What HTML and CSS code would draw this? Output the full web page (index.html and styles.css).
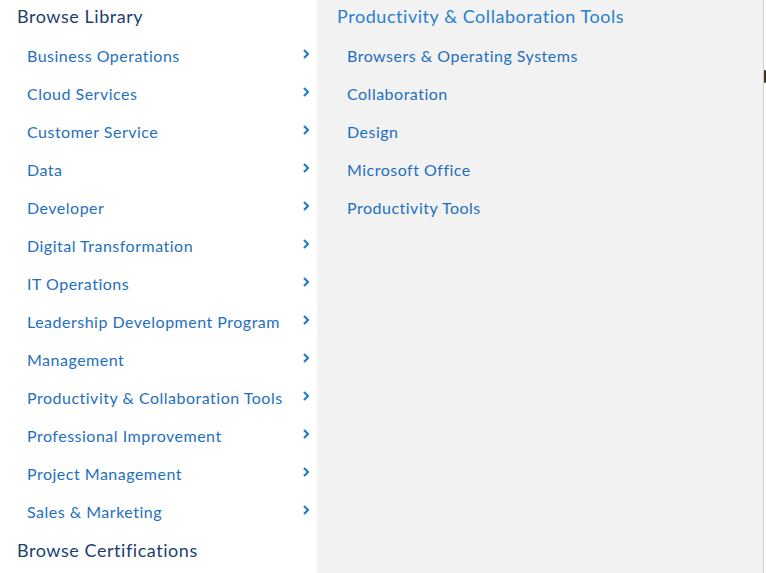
FILE: index.html
```html
<!DOCTYPE html>
<html lang="en">
<head>
<meta charset="utf-8">
<title>Browse Library</title>
<link rel="stylesheet" href="styles.css">
</head>
<body>
<div class="menu">
  <nav class="col-left">
    <div class="heading">Browse Library</div>
    <ul class="list">
      <li class="item"><span>Business Operations</span><svg class="chev" viewBox="0 0 6 10"><polyline points="1,1 5,5 1,9"/></svg></li>
      <li class="item"><span>Cloud Services</span><svg class="chev" viewBox="0 0 6 10"><polyline points="1,1 5,5 1,9"/></svg></li>
      <li class="item"><span>Customer Service</span><svg class="chev" viewBox="0 0 6 10"><polyline points="1,1 5,5 1,9"/></svg></li>
      <li class="item"><span>Data</span><svg class="chev" viewBox="0 0 6 10"><polyline points="1,1 5,5 1,9"/></svg></li>
      <li class="item"><span>Developer</span><svg class="chev" viewBox="0 0 6 10"><polyline points="1,1 5,5 1,9"/></svg></li>
      <li class="item"><span>Digital Transformation</span><svg class="chev" viewBox="0 0 6 10"><polyline points="1,1 5,5 1,9"/></svg></li>
      <li class="item"><span>IT Operations</span><svg class="chev" viewBox="0 0 6 10"><polyline points="1,1 5,5 1,9"/></svg></li>
      <li class="item"><span>Leadership Development Program</span><svg class="chev" viewBox="0 0 6 10"><polyline points="1,1 5,5 1,9"/></svg></li>
      <li class="item"><span>Management</span><svg class="chev" viewBox="0 0 6 10"><polyline points="1,1 5,5 1,9"/></svg></li>
      <li class="item"><span>Productivity &amp; Collaboration Tools</span><svg class="chev" viewBox="0 0 6 10"><polyline points="1,1 5,5 1,9"/></svg></li>
      <li class="item"><span>Professional Improvement</span><svg class="chev" viewBox="0 0 6 10"><polyline points="1,1 5,5 1,9"/></svg></li>
      <li class="item"><span>Project Management</span><svg class="chev" viewBox="0 0 6 10"><polyline points="1,1 5,5 1,9"/></svg></li>
      <li class="item"><span>Sales &amp; Marketing</span><svg class="chev" viewBox="0 0 6 10"><polyline points="1,1 5,5 1,9"/></svg></li>
    </ul>
    <div class="heading heading-cert">Browse Certifications</div>
  </nav>
  <section class="col-right">
    <div class="sub-heading">Productivity &amp; Collaboration Tools</div>
    <ul class="list">
      <li class="sub-item">Browsers &amp; Operating Systems</li>
      <li class="sub-item">Collaboration</li>
      <li class="sub-item">Design</li>
      <li class="sub-item">Microsoft Office</li>
      <li class="sub-item">Productivity Tools</li>
    </ul>
  </section>
  <div class="edge"><span class="edge-mark"></span></div>
</div>
</body>
</html>
```

FILE: styles.css
```css
html, body {
  margin: 0;
  padding: 0;
  background: #ffffff;
}
body {
  font-family: Lato, "Open Sans", sans-serif;
  width: 766px;
  height: 573px;
  overflow: hidden;
}
.menu {
  display: flex;
  height: 573px;
}
.col-left {
  width: 317px;
  flex: none;
  background: #ffffff;
}
.heading {
  font-size: 18px;
  line-height: 33px;
  color: #1d3e72;
  padding-left: 17px;
  padding-bottom: 4px;
  letter-spacing: 0.55px;
}
.heading-cert {
  padding-top: 3px;
}
.list {
  list-style: none;
  margin: 0;
  padding: 0;
}
.item {
  display: flex;
  justify-content: space-between;
  align-items: flex-start;
  height: 38px;
  line-height: 38px;
  padding-left: 27px;
  padding-right: 8px;
  font-size: 16px;
  color: #1f6fbf;
  letter-spacing: 0.5px;
  white-space: nowrap;
}
.chev {
  width: 6px;
  height: 10px;
  margin-top: 12px;
  flex: none;
  fill: none;
  stroke: #1a78d0;
  stroke-width: 2;
}
.col-right {
  flex: 1;
  background: #f2f2f2;
  border-right: 1px solid #cfcfcf;
}
.sub-heading {
  font-size: 18px;
  line-height: 33px;
  padding-left: 20px;
  padding-bottom: 4px;
  color: #2a7fcc;
  letter-spacing: 0.55px;
}
.sub-item {
  height: 38px;
  line-height: 38px;
  padding-left: 30px;
  font-size: 16px;
  color: #1f6fbf;
  letter-spacing: 0.5px;
}
.edge {
  width: 2px;
  flex: none;
  position: relative;
}
.edge-mark {
  position: absolute;
  left: 0;
  top: 70px;
  width: 2px;
  height: 13px;
  background: #3b3522;
  border-radius: 1px;
}
```
